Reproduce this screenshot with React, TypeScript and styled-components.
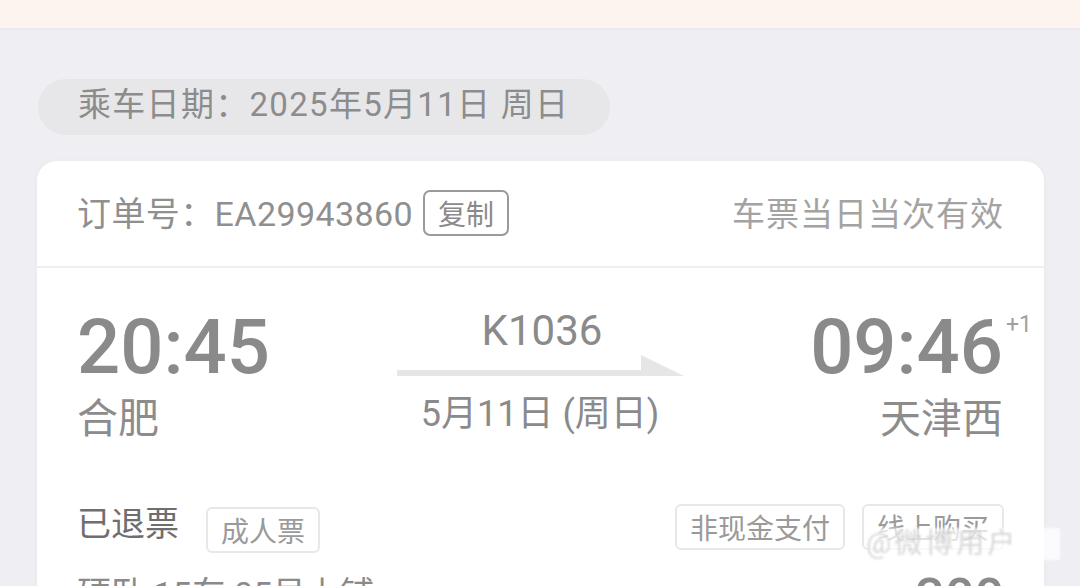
import React from "react";
import styled, { createGlobalStyle } from "styled-components";

const Global = createGlobalStyle`
  html, body { margin: 0; padding: 0; }
  body {
    background: #efeef3;
    font-family: "Roboto", "Noto Sans CJK SC", sans-serif;
    width: 1080px;
    height: 586px;
    overflow: hidden;
  }
`;

const Page = styled.div`
  width: 1080px;
  height: 586px;
  overflow: hidden;
  position: relative;
  background: #efeef3;
`;

const TopBand = styled.div`
  height: 28px;
  background: #fdf4ef;
  border-bottom: 2px solid #ebe9ee;
`;

const DatePill = styled.div`
  margin: 49px 0 0 38px;
  width: 572px;
  height: 56px;
  border-radius: 28px;
  background: #e7e7ea;
  display: flex;
  align-items: center;
  padding: 0 0 11px 40px;
  box-sizing: border-box;
  font-size: 33px;
  color: #8c8c8c;
  letter-spacing: 1.3px;
`;

const Card = styled.div`
  margin: 26px 0 0 37px;
  width: 1007px;
  background: #ffffff;
  border-radius: 20px 20px 0 0;
  box-shadow: 0 0 6px rgba(0, 0, 0, 0.03);
`;

const Header = styled.div`
  height: 107px;
  border-bottom: 2px solid #efefef;
  display: flex;
  align-items: center;
  justify-content: space-between;
  padding: 0 40px 4px 40px;
  box-sizing: border-box;
  font-size: 34px;
  color: #8f8f8f;
`;

const OrderNo = styled.div`
  display: flex;
  align-items: center;
  letter-spacing: 0.4px;
`;

const CopyBtn = styled.span`
  margin: 2px 0 0 10px;
  height: 42px;
  padding: 0 13px;
  border: 2px solid #9a9a9a;
  border-radius: 7px;
  font-size: 28px;
  color: #8a8a8a;
  display: inline-flex;
  align-items: center;
  letter-spacing: 0;
`;

const Valid = styled.div`
  color: #a3a3a3;
  font-size: 33px;
  letter-spacing: 1px;
`;

const Journey = styled.div`
  display: grid;
  grid-template-columns: 1fr auto 1fr;
  padding: 39px 41px 0 40px;
  color: #8a8a8a;
`;

const End = styled.div<{ $right?: boolean }>`
  display: flex;
  flex-direction: column;
  align-items: ${(p) => (p.$right ? "flex-end" : "flex-start")};
`;

const Time = styled.div`
  font-size: 76px;
  font-weight: 500;
  line-height: 80px;
  color: #8a8a8a;
  position: relative;
`;

const Plus = styled.span`
  position: absolute;
  top: 6px;
  left: 100%;
  margin-left: 3px;
  font-size: 23px;
  font-weight: 400;
  line-height: 1;
  color: #a0a0a0;
`;

const City = styled.div`
  margin-top: 8px;
  font-size: 41px;
  line-height: 48px;
  color: #8c8c8c;
`;

const Middle = styled.div`
  display: flex;
  flex-direction: column;
  align-items: center;
  padding-top: 0;
`;

const TrainNo = styled.div`
  font-size: 42px;
  line-height: 48px;
  color: #8a8a8a;
  padding-left: 4px;
`;

const Arrow = styled.svg`
  display: block;
  margin-top: 0;
`;

const TripDate = styled.div`
  margin-top: 15px;
  font-size: 36px;
  line-height: 44px;
  color: #8a8a8a;
`;

const StatusRow = styled.div`
  display: flex;
  align-items: flex-start;
  justify-content: space-between;
  padding: 59px 40px 0 40px;
`;

const Group = styled.div<{ $shift: number }>`
  display: flex;
  align-items: flex-start;
  gap: 17px;
  margin-top: ${(p) => p.$shift}px;
`;

const Status = styled.span`
  font-size: 34px;
  line-height: 40px;
  color: #6e6e6e;
  margin: -3px 10px 0 0;
`;

const Tag = styled.span`
  height: 42px;
  padding: 0 13px;
  border: 2px solid #e8e8e8;
  border-radius: 6px;
  font-size: 28px;
  color: #9a9a9a;
  display: inline-flex;
  align-items: center;
  box-sizing: content-box;
`;

const SeatRow = styled.div`
  display: flex;
  justify-content: space-between;
  align-items: flex-start;
  padding: 21px 40px 0 40px;
  height: 60px;
`;

const Seat = styled.div`
  font-size: 34px;
  color: #8a8a8a;
  line-height: 40px;
`;

const Price = styled.div`
  font-size: 52px;
  font-weight: 500;
  color: #8a8a8a;
  line-height: 52px;
  margin-top: -2px;
`;

const Watermark = styled.div`
  position: absolute;
  left: 866px;
  top: 528px;
  width: 194px;
  height: 32px;
  background: rgba(255, 255, 255, 0.72);
  font-size: 28px;
  line-height: 32px;
  color: rgba(205, 205, 205, 0.8);
  filter: blur(1px);
  white-space: nowrap;
  overflow: hidden;
  letter-spacing: 3px;
`;

export default function App() {
  return (
    <Page>
      <Global />
      <TopBand />
      <DatePill>乘车日期：2025年5月11日 周日</DatePill>
      <Card>
        <Header>
          <OrderNo>
            订单号：EA29943860
            <CopyBtn>复制</CopyBtn>
          </OrderNo>
          <Valid>车票当日当次有效</Valid>
        </Header>
        <Journey>
          <End>
            <Time>20:45</Time>
            <City>合肥</City>
          </End>
          <Middle>
            <TrainNo>K1036</TrainNo>
            <Arrow width="287" height="22" viewBox="0 0 287 22">
              <path d="M0 15 H244 V0 L287 21 H0 Z" fill="#e6e6e6" />
            </Arrow>
            <TripDate>5月11日 (周日)</TripDate>
          </Middle>
          <End $right>
            <Time>
              09:46
              <Plus>+1</Plus>
            </Time>
            <City>天津西</City>
          </End>
        </Journey>
        <StatusRow>
          <Group $shift={5}>
            <Status>已退票</Status>
            <Tag>成人票</Tag>
          </Group>
          <Group $shift={2}>
            <Tag>非现金支付</Tag>
            <Tag>线上购买</Tag>
          </Group>
        </StatusRow>
        <SeatRow>
          <Seat>硬卧 15车 05号上铺</Seat>
          <Price>300</Price>
        </SeatRow>
      </Card>
      <Watermark>@微博用户</Watermark>
    </Page>
  );
}
